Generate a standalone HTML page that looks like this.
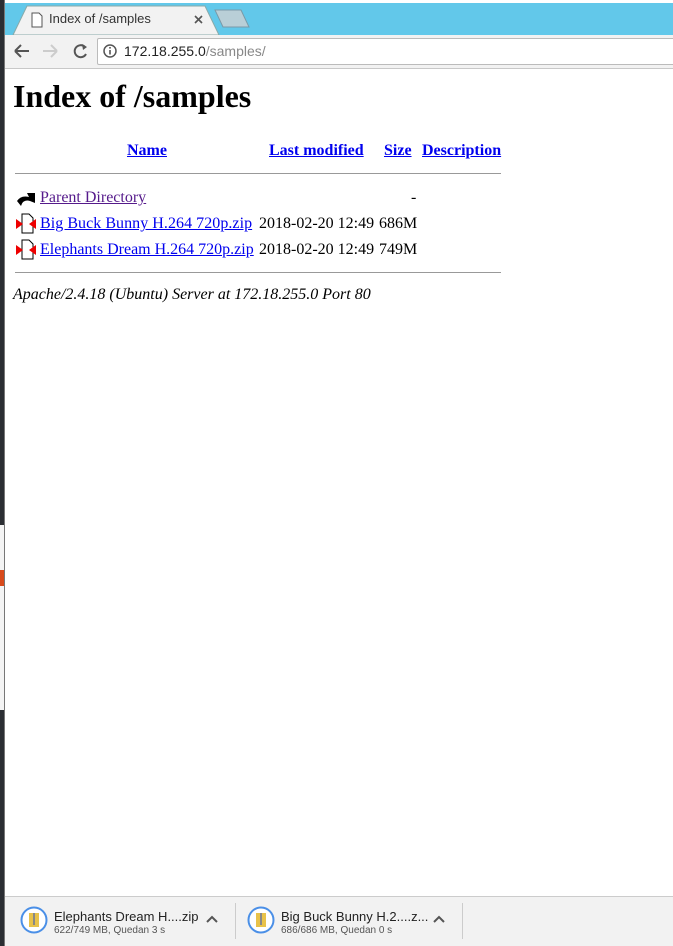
<!DOCTYPE html>
<html><head><meta charset="utf-8"><style>
*{margin:0;padding:0;box-sizing:border-box}
body{width:673px;height:946px;position:relative;overflow:hidden;background:#fff;font-family:"Liberation Serif",serif}
.abs{position:absolute}
a{color:#0000ee}
.page{position:absolute;left:5px;top:69px;right:0;bottom:50px;background:#fff}
h1{position:absolute;left:8px;top:9px;font-size:32px;font-weight:bold;color:#000}
.row{position:absolute;white-space:nowrap;font-size:16px}
</style></head><body>
<div class="abs" style="left:0;top:0;width:5px;height:946px;background:#2b2e33"></div>
<div class="abs" style="left:0;top:525px;width:5px;height:185px;background:#f4f4f4"></div>
<div class="abs" style="left:0;top:570px;width:5px;height:16px;background:#d84a1b"></div>
<div class="abs" style="left:4px;top:0;width:1px;height:946px;background:#777"></div>
<div class="abs" style="left:5px;top:0;width:668px;height:35px;background:#62c8ea"></div>
<div class="abs" style="left:5px;top:0;width:668px;height:3px;background:#fff"></div>
<svg class="abs" style="left:5px;top:3px" width="668" height="33">
<path d="M8 32 L22 3 L200 3 L214 32 Z" fill="#f2f2f2" stroke="#8aa" stroke-width="1"/>
<path d="M210 7 L236 7 L244 24 L218 24 Z" fill="#b9cfd7" stroke="#7a9aa8"/>
<path d="M27 10 h7 l3 3 v11 h-10 z" fill="#fff" stroke="#555"/>
<path d="M190 13 l7 7 M197 13 l-7 7" stroke="#555" stroke-width="1.6"/>
</svg>
<div class="abs" style="left:49px;top:11px;font:13px 'Liberation Sans',sans-serif;color:#333">Index of /samples</div>
<div class="abs" style="left:5px;top:35px;width:668px;height:34px;background:#f2f2f2;border-bottom:1px solid #c8c8c8"></div>
<svg class="abs" style="left:5px;top:35px" width="95" height="33">
<path d="M10 16 h14 M10 16 l6 -6 M10 16 l6 6" stroke="#555" stroke-width="2" fill="none"/>
<path d="M38 16 h14 M52 16 l-6 -6 M52 16 l-6 6" stroke="#ccc" stroke-width="2" fill="none"/>
<path d="M80 12 A6 6 0 1 0 81 19" stroke="#555" stroke-width="2" fill="none"/><path d="M77 9 l5 3 l-4 3z" fill="#555"/>
</svg>
<div class="abs" style="left:97px;top:38px;width:580px;height:27px;background:#fff;border:1px solid #bbb;border-radius:2px"></div>
<svg class="abs" style="left:103px;top:44px" width="14" height="14"><circle cx="7" cy="7" r="6" fill="none" stroke="#555" stroke-width="1.5"/><rect x="6.2" y="6" width="1.6" height="4.5" fill="#555"/><rect x="6.2" y="3" width="1.6" height="1.6" fill="#555"/></svg>
<div class="abs" style="left:124px;top:43px;font:14px 'Liberation Sans',sans-serif;color:#222">172.18.255.0<span style="color:#888">/samples/</span></div>
<div class="page">
<h1>Index of /samples</h1>
<div class="row" style="left:122px;top:73px;font-weight:bold"><a href="#">Name</a></div>
<div class="row" style="left:264px;top:73px;font-weight:bold"><a href="#">Last modified</a></div>
<div class="row" style="left:379px;top:73px;font-weight:bold"><a href="#">Size</a></div>
<div class="row" style="left:417px;top:73px;font-weight:bold"><a href="#">Description</a></div>
<div class="abs" style="left:10px;top:104px;width:486px;height:1px;background:#999"></div>
<svg class="abs" style="left:10px;top:118px" width="22" height="22"><path d="M2 14 Q6 8 14 10 L12 6 L20 6 L20 16 L15 14 Q8 12 6 19 Z" fill="#000"/></svg>
<div class="row" style="left:35px;top:120px"><a href="#" style="color:#551a8b">Parent Directory</a></div>
<div class="row" style="left:406px;top:120px">-</div>
<svg class="abs" style="left:10px;top:143px" width="22" height="22"><path d="M7 2 h7 l4 4 v15 h-11 z" fill="#fff" stroke="#000"/><path d="M1 7 l7 5 l-7 5z M21 7 l-7 5 l7 5z" fill="#e00"/></svg>
<div class="row" style="left:35px;top:146px;letter-spacing:0.05px"><a href="#">Big Buck Bunny H.264 720p.zip</a></div>
<div class="row" style="left:254px;top:146px">2018-02-20 12:49</div>
<div class="row" style="left:374px;top:146px">686M</div>
<svg class="abs" style="left:10px;top:169px" width="22" height="22"><path d="M7 2 h7 l4 4 v15 h-11 z" fill="#fff" stroke="#000"/><path d="M1 7 l7 5 l-7 5z M21 7 l-7 5 l7 5z" fill="#e00"/></svg>
<div class="row" style="left:35px;top:172px"><a href="#">Elephants Dream H.264 720p.zip</a></div>
<div class="row" style="left:254px;top:172px">2018-02-20 12:49</div>
<div class="row" style="left:374px;top:172px">749M</div>
<div class="abs" style="left:10px;top:203px;width:486px;height:1px;background:#999"></div>
<div class="row" style="left:8px;top:217px;font-style:italic">Apache/2.4.18 (Ubuntu) Server at 172.18.255.0 Port 80</div>
</div>
<div class="abs" style="left:5px;top:896px;width:668px;height:50px;background:#f2f2f2;border-top:1px solid #ccc"></div>
<svg class="abs" style="left:20px;top:906px" width="28" height="28"><circle cx="14" cy="14" r="12.5" fill="#fff" stroke="#4a8fe7" stroke-width="2"/><rect x="9" y="7" width="10" height="14" fill="#e8c24a"/><rect x="13" y="7" width="2" height="12" fill="#888"/></svg>
<div class="abs" style="left:54px;top:909px;font:13px 'Liberation Sans',sans-serif;color:#222">Elephants Dream H....zip</div>
<div class="abs" style="left:54px;top:925px;font:10px 'Liberation Sans',sans-serif;color:#555">622/749 MB, Quedan 3 s</div>
<svg class="abs" style="left:205px;top:914px" width="14" height="10"><path d="M2 8 l5 -5 l5 5" stroke="#555" stroke-width="2" fill="none"/></svg>
<div class="abs" style="left:235px;top:903px;width:1px;height:36px;background:#ccc"></div>
<svg class="abs" style="left:247px;top:906px" width="28" height="28"><circle cx="14" cy="14" r="12.5" fill="#fff" stroke="#4a8fe7" stroke-width="2"/><rect x="9" y="7" width="10" height="14" fill="#e8c24a"/><rect x="13" y="7" width="2" height="12" fill="#888"/></svg>
<div class="abs" style="left:281px;top:909px;font:13px 'Liberation Sans',sans-serif;color:#222">Big Buck Bunny H.2....z...</div>
<div class="abs" style="left:281px;top:925px;font:10px 'Liberation Sans',sans-serif;color:#555">686/686 MB, Quedan 0 s</div>
<svg class="abs" style="left:432px;top:914px" width="14" height="10"><path d="M2 8 l5 -5 l5 5" stroke="#555" stroke-width="2" fill="none"/></svg>
<div class="abs" style="left:462px;top:903px;width:1px;height:36px;background:#ccc"></div>
</body></html>
